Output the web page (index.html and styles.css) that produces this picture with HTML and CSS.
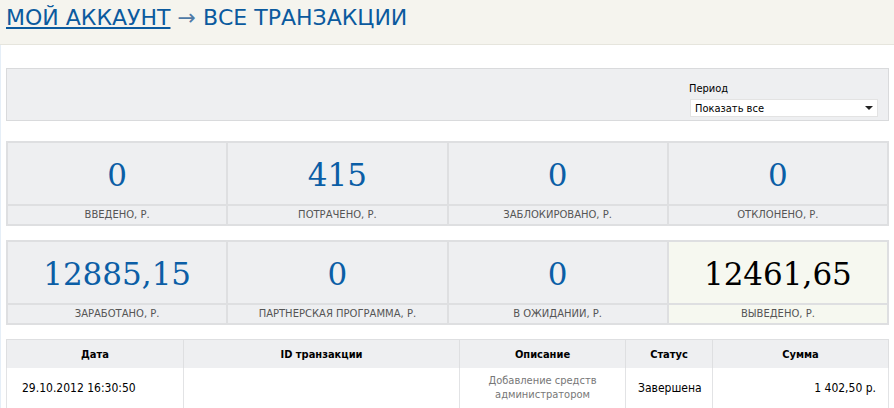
FILE: index.html
```html
<!DOCTYPE html>
<html lang="ru">
<head>
  <meta charset="UTF-8" />
  <title>Все транзакции</title>
  <link rel="stylesheet" href="styles.css">
</head>
<body>
<div class="header">
  <h1><a href="#">МОЙ АККАУНТ</a> <span class="arrow">&rarr;</span> ВСЕ ТРАНЗАКЦИИ</h1>
</div>
<div class="page">
  <!-- Filter -->
  <div class="filter">
    <div class="period">
      <label for="period">Период</label>
      <div class="select">
        <span>Показать все</span>
        <span class="caret"></span>
      </div>
    </div>
  </div>
  <!-- Totals -->
  <div class="stats">
    <div class="cell"><div class="value">0</div><div class="label">Введено, р.</div></div>
    <div class="cell"><div class="value">415</div><div class="label">Потрачено, р.</div></div>
    <div class="cell"><div class="value">0</div><div class="label">Заблокировано, р.</div></div>
    <div class="cell"><div class="value">0</div><div class="label">Отклонено, р.</div></div>
  </div>
  <div class="stats">
    <div class="cell"><div class="value">12885,15</div><div class="label">Заработано, р.</div></div>
    <div class="cell"><div class="value">0</div><div class="label">Партнерская программа, р.</div></div>
    <div class="cell"><div class="value">0</div><div class="label">В ожидании, р.</div></div>
    <div class="cell done"><div class="value">12461,65</div><div class="label">Выведено, р.</div></div>
  </div>
  <!-- Transactions -->
  <table class="transactions">
    <colgroup>
      <col class="col-date">
      <col class="col-id">
      <col class="col-desc">
      <col class="col-status">
      <col>
    </colgroup>
    <tr>
      <th>Дата</th>
      <th>ID транзакции</th>
      <th>Описание</th>
      <th>Статус</th>
      <th>Сумма</th>
    </tr>
    <tr>
      <td class="date">29.10.2012 16:30:50</td>
      <td></td>
      <td class="desc">Добавление средств администратором</td>
      <td class="status">Завершена</td>
      <td class="sum">1 402,50 р.</td>
    </tr>
  </table>
</div>
</body>
</html>
```
FILE: styles.css
```css
body {
  margin: 0;
  font-family: 'DejaVu Sans Condensed', 'DejaVu Sans', sans-serif;
  background: #fff;
  color: #000;
}
.header {
  background: #f5f4ee;
  height: 44px;
  border-bottom: 1px solid #e6e5dd;
  padding: 0 6px;
}
.header h1 {
  margin: 0;
  font-family: 'DejaVu Sans', sans-serif;
  font-weight: normal;
  font-size: 22px;
  line-height: 36px;
  color: #0b5a9e;
}
.header a {
  color: #0b5a9e;
  text-decoration: underline;
}
.arrow {
  color: #4f7aa6;
}
.page {
  border-left: 1px solid #e5eef7;
  padding: 23px 5px 0 5px;
}
.filter {
  background: #eeeff1;
  border: 1px solid #d9dadc;
  height: 51px;
  display: flex;
  justify-content: flex-end;
  margin-bottom: 20px;
}
.period {
  width: 198px;
  padding-top: 13px;
}
.period label {
  display: block;
  font-size: 11px;
  line-height: 14px;
  margin-left: -1px;
  margin-bottom: 3px;
}
.select {
  width: 188px;
  height: 18px;
  background: #fff;
  border: 1px solid #e3e3e3;
  box-sizing: border-box;
  display: flex;
  align-items: center;
  justify-content: space-between;
  padding: 0 4px;
  font-size: 11px;
}
.caret {
  width: 0;
  height: 0;
  border-left: 4px solid transparent;
  border-right: 4px solid transparent;
  border-top: 4px solid #222;
}
.stats {
  display: grid;
  grid-template-columns: repeat(4, 1fr);
  gap: 2px;
  background: #dedfe1;
  border: 2px solid #dedfe1;
  margin-bottom: 14px;
}
.cell {
  background: #eeeff1;
  display: flex;
  flex-direction: column;
}
.cell.done {
  background: #f6f8f0;
}
.value {
  height: 61px;
  display: flex;
  align-items: center;
  justify-content: center;
  font-family: 'DejaVu Serif', 'Liberation Serif', serif;
  font-size: 31px;
  color: #0b5ea6;
  padding-top: 3px;
  box-sizing: border-box;
}
.done .value {
  color: #000;
}
.label {
  border-top: 2px solid #dedfe1;
  height: 18px;
  line-height: 18px;
  text-align: center;
  text-transform: uppercase;
  font-family: 'DejaVu Sans', sans-serif;
  font-size: 10px;
  color: #555;
}
.transactions {
  width: 100%;
  table-layout: fixed;
  border-collapse: collapse;
  font-size: 12px;
}
.transactions th {
  background: #eeeff1;
  font-size: 11px;
  height: 26px;
  border: 1px solid #dedfe1;
  border-bottom: none;
}
.transactions td {
  height: 40px;
  border-left: 1px solid #e2e3e5;
  border-bottom: 1px solid #e2e3e5;
  padding: 0;
}
.col-date { width: 177px; }
.col-id { width: 276px; }
.col-desc { width: 166px; }
.col-status { width: 87px; }
.transactions td.date {
  padding-left: 15px;
}
.transactions td.desc {
  text-align: center;
  color: #777;
  font-size: 11px;
  line-height: 14px;
  padding: 0 20px;
}
.transactions td.status {
  padding-left: 12px;
}
.transactions td.sum {
  text-align: right;
  padding-right: 12px;
  border-right: 1px solid #e2e3e5;
}
```
